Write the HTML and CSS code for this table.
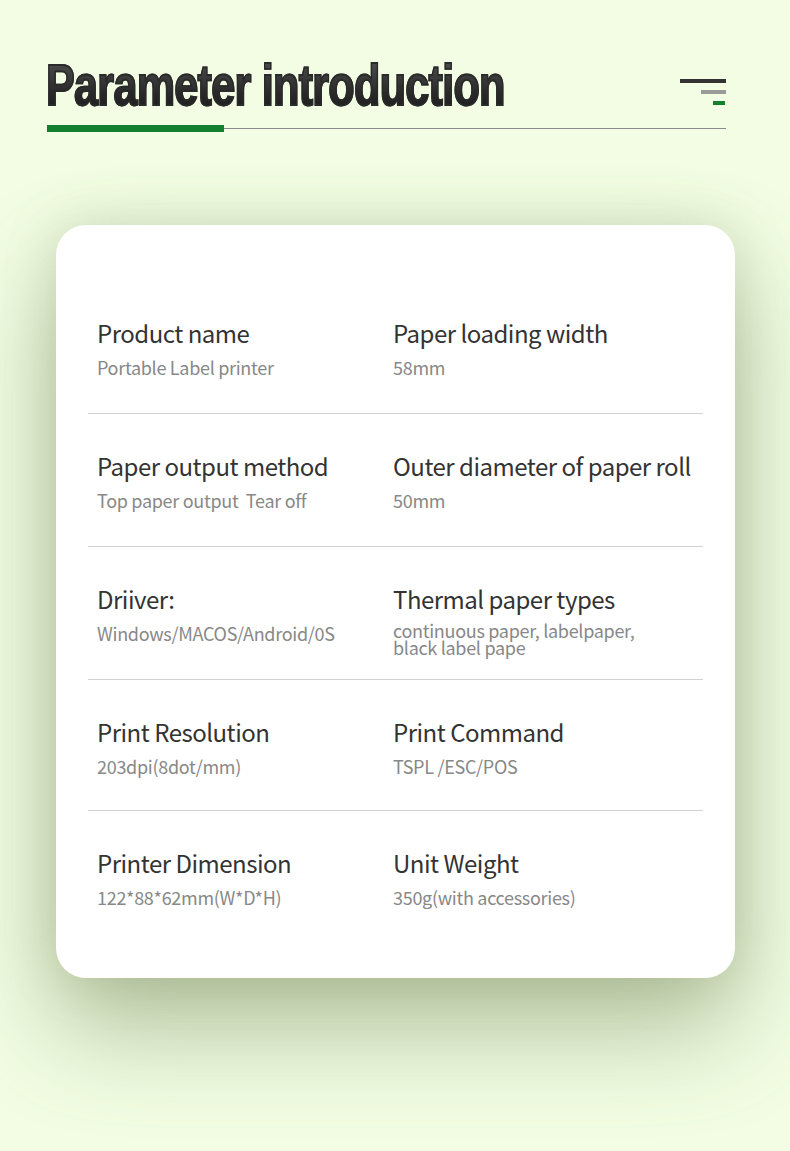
FILE: index.html
```html
<!DOCTYPE html>
<html>
<head>
<meta charset="utf-8">
<link rel="stylesheet" href="styles.css">
</head>
<body>
<div class="page">
  <header class="head">
    <div class="head-top">
      <h1 class="title">Parameter introduction</h1>
      <div class="menu-icon">
        <span class="bar bar-1"></span>
        <span class="bar bar-2"></span>
        <span class="bar bar-3"></span>
      </div>
    </div>
    <div class="rule">
      <span class="rule-green"></span>
      <span class="rule-gray"></span>
    </div>
  </header>

  <section class="card">
    <div class="list">
      <div class="row">
        <div class="cell left"><div class="label">Product name</div><div class="value">Portable Label printer</div></div>
        <div class="cell right"><div class="label">Paper loading width</div><div class="value">58mm</div></div>
      </div>
      <div class="row">
        <div class="cell left"><div class="label">Paper output method</div><div class="value">Top paper output&nbsp; Tear off</div></div>
        <div class="cell right"><div class="label">Outer diameter of paper roll</div><div class="value">50mm</div></div>
      </div>
      <div class="row">
        <div class="cell left"><div class="label">Driiver:</div><div class="value">Windows/MACOS/Android/0S</div></div>
        <div class="cell right"><div class="label">Thermal paper types</div><div class="value multi"><div>continuous paper, labelpaper,</div><div>black label pape</div></div></div>
      </div>
      <div class="row short">
        <div class="cell left"><div class="label">Print Resolution</div><div class="value">203dpi(8dot/mm)</div></div>
        <div class="cell right"><div class="label">Print Command</div><div class="value">TSPL /ESC/POS</div></div>
      </div>
      <div class="row last">
        <div class="cell left"><div class="label">Printer Dimension</div><div class="value">122*88*62mm(W*D*H)</div></div>
        <div class="cell right"><div class="label">Unit Weight</div><div class="value">350g(with accessories)</div></div>
      </div>
    </div>
  </section>
</div>
</body>
</html>
```

FILE: styles.css
```css
html, body {
  margin: 0;
  padding: 0;
}
body {
  background: #f2fde3;
  width: 790px;
  height: 1151px;
  overflow: hidden;
}
.page {
  width: 790px;
  height: 1151px;
  background: #f2fde3;
  padding-top: 50px;
  box-sizing: border-box;
}
.head {
  margin-left: 46px;
  width: 680px;
}
.head-top {
  display: flex;
  justify-content: space-between;
  align-items: flex-start;
  height: 75px;
}
.title {
  margin: 0;
  font-family: "Liberation Sans Narrow", "Liberation Sans", sans-serif;
  font-weight: 700;
  font-size: 57px;
  line-height: 70px;
  letter-spacing: -1px;
  background: linear-gradient(180deg, #5a5a5a 0%, #2a2a2a 60%, #151515 100%);
  -webkit-background-clip: text;
  background-clip: text;
  color: transparent;
  -webkit-text-stroke: 1.8px #2a2a2a;
  transform-origin: left center;
  transform: scaleX(0.758);
  white-space: nowrap;
}
.menu-icon {
  display: flex;
  flex-direction: column;
  align-items: flex-end;
  gap: 7px;
  margin-top: 29px;
  width: 46px;
}
.bar {
  display: block;
  height: 4px;
}
.bar-1 { width: 46px; background: #333333; }
.bar-2 { width: 25px; background: #9a9a9a; }
.bar-3 { width: 12px; background: #137f2f; margin-right: 1px; }

.rule {
  display: flex;
  align-items: center;
  height: 7px;
  margin-left: 1px;
}
.rule-green {
  display: block;
  width: 177px;
  height: 7px;
  background: #137f2f;
}
.rule-gray {
  display: block;
  flex: 1;
  height: 1px;
  background: #8a8a8a;
}

.card {
  margin: 93px 0 0 56px;
  width: 679px;
  height: 753px;
  background: #ffffff;
  border-radius: 30px;
  box-shadow: 0 50px 100px rgba(100, 118, 70, 0.45), 0 0 50px rgba(130, 150, 100, 0.25);
  padding-top: 56px;
  box-sizing: border-box;
}
.list {
  margin: 0 32px;
}
.row {
  display: grid;
  grid-template-columns: 305px 1fr;
  height: 133px;
  box-sizing: border-box;
  border-bottom: 1px solid #d2d2d2;
  padding-top: 37px;
}
.row.short {
  height: 131px;
}
.row.last {
  border-bottom: none;
}
.cell.left {
  padding-left: 9px;
}
.cell.right {
  padding-left: 0;
}
.label {
  font-family: "Noto Sans CJK SC", "Noto Sans", sans-serif;
  font-size: 24px;
  line-height: 30px;
  color: #333333;
  letter-spacing: -0.5px;
  white-space: nowrap;
}
.value {
  margin-top: 10px;
  font-family: "Noto Sans CJK SC", "Noto Sans", sans-serif;
  font-size: 18px;
  line-height: 18px;
  color: #888888;
  letter-spacing: -0.3px;
  white-space: nowrap;
}
.value.multi {
  margin-top: 8px;
}
.value.multi div {
  height: 17px;
  line-height: 17px;
}
```
